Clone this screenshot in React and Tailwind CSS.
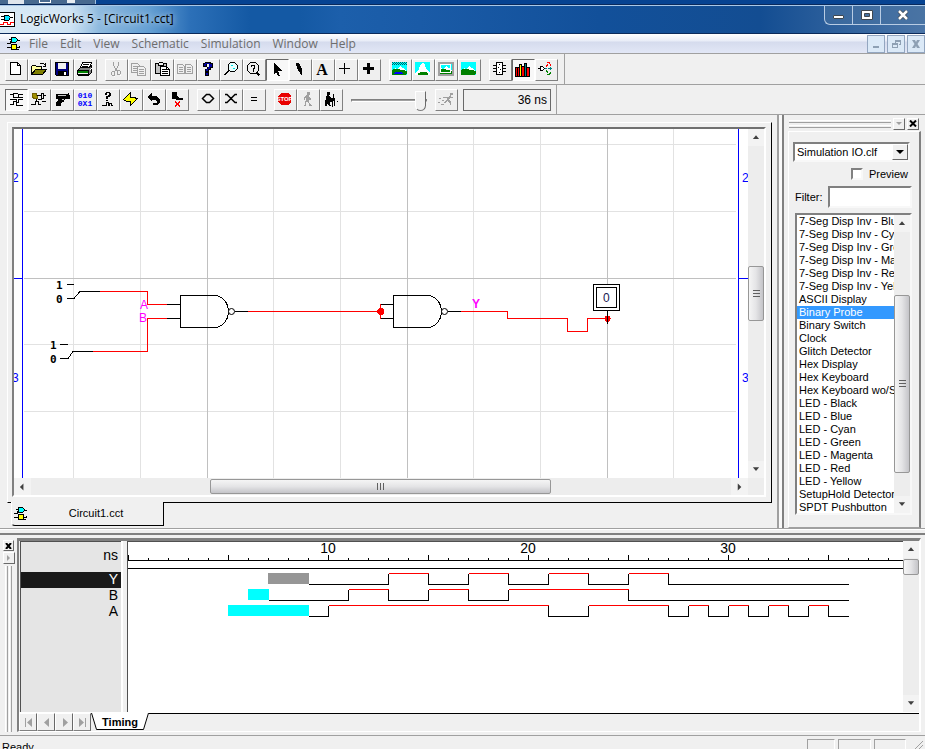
import React from "react";

const INK = "#000";
const DIM = "#a0a0a0";

function Icon({ children, w = 16, h = 16, color = INK }) {
  return (
    <svg width={w} height={h} viewBox={`0 0 ${w} ${h}`} fill="none" stroke={color} shapeRendering="crispEdges" className="shrink-0" aria-hidden="true">
      {children}
    </svg>
  );
}

const GateIcon = () => (
  <Icon w={13} h={14}>
    <path d="M4.5 0.5h4l2 2v1l-2 2h-4z" fill="#00ffff" />
    <path d="M2 2.5h2M11 3.5h2M0 6.5h3v-2h2M0 10.5h4M10 10.5h2v-2M10 12.5h2" />
    <path d="M4.5 7.5h5v5h-5z" fill="#ffff00" />
  </Icon>
);

const NewIcon = () => (
  <Icon><path d="M2.5 0.5h7l3 3v9h-10z" fill="#fff" /><path d="M9.5 0.5v3h3" /></Icon>
);
const OpenIcon = () => (
  <Icon>
    <path d="M0.5 12.5v-8l1-1h3l1 1h5v3" fill="#ffffa0" />
    <path d="M0.5 12.5l4-5h11l-4 5z" fill="#808000" />
    <path d="M8.5 2.5l1-1h3l2 2M14.5 1v3h-3" />
  </Icon>
);
const SaveIcon = () => (
  <Icon>
    <path d="M1.5 0.5h13v13h-12l-1-1z" fill="#000080" />
    <path d="M4 1h8v6h-8z" fill="#f0f0f0" stroke="none" />
    <path d="M4 9h9v4h-9z" fill="#000" stroke="none" />
    <path d="M10 10h2v3h-2z" fill="#fff" stroke="none" />
  </Icon>
);
const PrintIcon = () => (
  <Icon>
    <path d="M5.5 0.5h9l-2 5h-9z" fill="#fff" />
    <path d="M6 2.5h6M5 4.5h6" />
    <path d="M3.5 5.5h9l2-2v7l-3 3h-10l-1-1v-4z" fill="#808080" />
    <path d="M0.5 8.5h11v4h-11z" fill="#f0f0f0" />
    <path d="M1 9h10v2h-10z" fill="#008000" stroke="none" />
    <path d="M12.5 8.5l2-2" stroke="#fff" />
  </Icon>
);
const CutIcon = () => (
  <Icon color={DIM}>
    <path d="M5.5 0v3l1 2 2 3v1M10.5 0v3l-1 2-2 3v1" />
    <path d="M4.5 9.5h2v4h-2l-1-1v-2zM9.5 8.5h2l1 1v2l-1 1h-2z" />
    <path d="M6 14.5h1M12 13.5h1" stroke="#fff" />
  </Icon>
);
const CopyIcon = () => (
  <Icon color={DIM}>
    <path d="M0.5 1.5h6l2 2v7h-8z" />
    <path d="M2 4.5h4M2 6.5h4M2 8.5h4" />
    <path d="M6.5 4.5h6l2 2v7h-8z" fill="#f0f0f0" />
    <path d="M8 7.5h5M8 9.5h5M8 11.5h5" />
  </Icon>
);
const PasteIcon = () => (
  <Icon>
    <path d="M1.5 1.5h11v10h-11z" fill="#c0c0c0" />
    <path d="M4.5 1.5l1-1h3l1 1v2h-5z" fill="#f0f0f0" />
    <path d="M6.5 4.5h6l3 3v6h-9z" fill="#fff" />
    <path d="M8 7.5h4M8 9.5h6M8 11.5h6M12.5 4.5v3h3" />
  </Icon>
);
const DupIcon = () => (
  <Icon color={DIM}>
    <path d="M0.5 2.5h5l2 2v7h-7zM8.5 2.5h5l2 2v7h-7z" />
    <path d="M2 5.5h4M2 7.5h4M2 9.5h4M10 5.5h4M10 7.5h4M10 9.5h4" />
  </Icon>
);
const HelpIcon = () => (
  <Icon color="none">
    <path d="M5 0h6v1h2v5h-2v2h-2v2h-4v-3h2v-2h2v-3h-2v3h-4v-4h2zM5 10h4v4h-4z" fill="#000" />
    <path d="M5 1h5v1h2v3h-2v2h-2v2h-2v-2h2v-2h1v-3h-3v2h-2v-2h1zM6 11h2v2h-2z" fill="#0000a0" />
  </Icon>
);
const ZoomIcon = () => (
  <Icon>
    <path d="M7.5 0.5h4l3 3v3l-3 3h-4l-2-2v-5z" fill="#e8ffff" />
    <path d="M8 3.5h2M10 6.5h2" stroke="#00e0e0" />
    <path d="M5.5 8.5l-5 5M6.5 8.5l-5 5" />
  </Icon>
);
const FindIcon = () => (
  <Icon>
    <path d="M4.5 0.5h5l3 3v5l-3 3h-5l-3-3v-5z" />
    <path d="M10.5 10.5l3 3" strokeWidth="2" />
    <path d="M5.5 4.5v-1h3v3h-1v2M7 9.5h1" />
  </Icon>
);
const ArrowIcon = () => (
  <Icon color="none"><path d="M5 1v11l2-2 2 4h2l-2-5h4z" fill="#000" /></Icon>
);
const PenIcon = () => (
  <Icon color="none"><path d="M4 1h3l3 6v6h-1l-4-7z" fill="#000" /></Icon>
);
const LetterIcon = () => (
  <Icon color="none">
    <text x="7" y="13" textAnchor="middle" fontSize="16" fill="#000" className="font-['Liberation_Serif',serif] font-bold">A</text>
  </Icon>
);
const CrossIcon = () => <Icon><path d="M6.5 1v11M1 6.5h11" /></Icon>;
const PlusIcon = () => <Icon><path d="M7.5 1v11M2 6.5h11" strokeWidth="3" /></Icon>;

function Scene({ kind }) {
  return (
    <Icon color="none">
      <path d="M0 0h15v13h-15z" fill="#00ffff" />
      {kind === "rain" && <path d="M0 0.5h15M1 1.5h14M0 2.5h15" stroke="#006060" strokeDasharray="1 1" />}
      {kind === "peak" ? (
        <path d="M0 13v-2l4-3 1-5 3-3 2 3 1 4 4 4v2z" fill="#fff" />
      ) : (
        <path d="M1 9l2-3 2 1 3-3 3 2 4 4v2h-14z" fill="#fff" />
      )}
      <path d={kind === "peak" ? "M3 11l3-1h4l3 1v2h-10z" : "M0 8l1-1h5l4 1 5 1v3l-2 1h-13z"} fill="#008000" />
      {kind === "rain" && <path d="M3 10h6l2 1-1 1h-8z" fill="#0000ff" />}
      {kind === "frame" && <path d="M0.5 0.5h14v12h-14z" stroke="#a0a0a0" strokeWidth="2" />}
      {kind === "frame" && <path d="M2.5 2.5h10v8h-10z" stroke="#fff" />}
    </Icon>
  );
}

const ChipIcon = () => (
  <Icon>
    <path d="M4.5 0.5h6v12h-6z" fill="#fff" />
    <path d="M1 3.5h3M1 6.5h3M1 9.5h3M11 3.5h3M11 6.5h3M11 9.5h3M7 2.5h1M6 5.5h1M8 7.5h1M7 10.5h1" />
  </Icon>
);
const BooksIcon = () => (
  <Icon>
    <path d="M0.5 5.5h4v9h-4z" fill="#ff0000" />
    <path d="M4.5 2.5h2v12h-2z" fill="#ffff00" />
    <path d="M6.5 4.5h3v10h-3z" fill="#ff0000" />
    <path d="M9.5 1.5h2v13h-2z" fill="#008080" />
    <path d="M11.5 5.5h3v9h-3z" fill="#ff0000" />
    <path d="M2.5 6v8" />
  </Icon>
);
const RouteIcon = () => (
  <Icon>
    <path d="M0 6.5h2M2.5 4.5h2l2 2-2 2h-2z" fill="#fff" />
    <path d="M8 4.5l4-4M9 0.5h3v3" stroke="#ff0000" strokeDasharray="3 1" />
    <path d="M8 8.5l4 4M9 12.5h3v-3" stroke="#008000" strokeDasharray="3 1" />
    <path d="M7 6.5h2M10 6.5h4M12.5 5v3" stroke="#008080" />
  </Icon>
);

const WaveIcon = () => (
  <Icon>
    <path d="M2 2.5h3v3h5v-3h5M2 7.5h6v3h2v-3h5M2 12.5h3v-3h3v4h7" />
    <path d="M5 1.5h5M11 5.5h4" />
  </Icon>
);
const ProbeIcon = () => (
  <Icon>
    <path d="M1 1.5h4l1 2v3h-3l-2-2z" fill="#a09000" stroke="#706000" />
    <path d="M6 3.5h4M10.5 1v5h2v-5zM13 3.5h2" />
    <path d="M0 12.5h4v-3h3v3h3M11 9.5h4M7 7.5h4M5.5 7v2" />
  </Icon>
);
const GunIcon = () => (
  <Icon color="none">
    <path d="M2 2h12v-1h1v2h1v4h-5l-1 3h-2l-1 1v3h-5v-3l2-3-1-2-1 1v-3l-1-1z" fill="#000" />
    <path d="M4 3h8v1h-8zM8 7h2v1h-2z" fill="#c8c8c8" />
  </Icon>
);
const BitsIcon = () => (
  <Icon color="none">
    <g fill="#0000ff" fontSize="8" textAnchor="middle" className="font-['Liberation_Mono',monospace] font-bold">
      <text x="8" y="6">010</text>
      <text x="8" y="14">0X1</text>
    </g>
  </Icon>
);
const QueryIcon = () => (
  <Icon>
    <path d="M5 3v-2h1v-1h4v1h1v3h-1v1h-2v2h-2v-3h2v-1h1v-2h-2v2zM6 8h2v1h-2z" fill="#000" stroke="none" />
    <path d="M2 13.5h4v-3h2v3h1v-2h2v2h2" />
  </Icon>
);
const BoltIcon = () => (
  <Icon><path d="M0.5 7.5l7-7v5h3l4 1-7 7v-4h-4z" fill="#ffff00" /></Icon>
);
const UndoIcon = () => (
  <Icon color="none"><path d="M1 5l5-4v3h4l4 3v3l-3 3h-4v-2h3l1-1v-1l-2-1h-3v2z" fill="#000" /></Icon>
);
const BootIcon = () => (
  <Icon>
    <path d="M3 0h5v4l3 2h3v2h-7l-1-1h-3z" fill="#000" stroke="none" />
    <path d="M6 9.5l5 5M11 9.5l-5 5" stroke="#ff0000" strokeWidth="1.5" />
  </Icon>
);
const DiamondIcon = () => (
  <Icon><path d="M2.5 6.5l4-4h3l4 4-4 4h-3z" strokeWidth="1.5" shapeRendering="auto" /></Icon>
);
const MeetIcon = () => (
  <Icon><path d="M2 2.5h2l4 4-4 4h-2M14 2.5h-2l-4 4 4 4h2" strokeWidth="1.5" shapeRendering="auto" /></Icon>
);
const EqualIcon = () => <Icon><path d="M5 5.5h6M5 8.5h6" /></Icon>;
const StopIcon = () => (
  <Icon color="none">
    <path d="M4 1h7l3 3v6l-3 3h-7l-3-3v-6z" fill="#e80000" />
    <text x="7.5" y="9" fontSize="6" textAnchor="middle" fill="#fff" className="font-['Liberation_Sans',sans-serif] font-bold">STOP</text>
  </Icon>
);
const StepIcon = () => (
  <Icon color="none">
    <path d="M7 0h3v3h-1v2l2 2v1h-2v2l2 3h1v1h-3v-2l-2-3-1 2v3h-2v-1h1v-3l1-2v-2h-1v2h-1v-3l2-2h1z" fill={DIM} />
  </Icon>
);
const WalkIcon = () => (
  <Icon color="none">
    <path d="M4 0h3v3h-1v1l2 2h2v-4h1v4h1v8h-1v-5h-1v6h-1v-5h-2v2l1 2h-2l-1-3-1 3h-2l1-5v-4l1-2zM2 8h1v6h-1zM14 9h1v1h-1z" fill="#000" />
  </Icon>
);
const RunIcon = () => (
  <Icon color="none">
    <path d="M12 1h3v2h-2v2h2v1h-3l-1 2 2 2v3h-1v-2l-3-2-1 2h-2v-1h1l2-3v-1h-2v-1h3l2-2zM5 5h2v1h-2zM1 6h2v1h-2zM4 8h2v1h-2zM0 10h2v1h-2zM3 12h3v1h-3z" fill={DIM} />
  </Icon>
);

function ToolButton({ label, pressed, children }) {
  return (
    <button
      type="button"
      aria-label={label}
      aria-pressed={pressed || undefined}
      className={
        "flex h-[22px] w-[23px] shrink-0 items-start border pt-[2px] pl-[2px] " +
        (pressed
          ? "border-t-[#696969] border-l-[#696969] border-r-white border-b-white bg-[#f8f8f8]"
          : "border-t-white border-l-white border-r-[#808080] border-b-[#808080] bg-[#efefef]")
      }
    >
      {children}
    </button>
  );
}

function Group({ items }) {
  return (
    <div className="flex">
      {items.map(([label, icon, pressed]) => (
        <ToolButton key={label} label={label} pressed={pressed}>{icon}</ToolButton>
      ))}
    </div>
  );
}

const FILE_TOOLS = [["New", <NewIcon />], ["Open", <OpenIcon />], ["Save", <SaveIcon />], ["Print", <PrintIcon />]];
const EDIT_TOOLS = [
  ["Cut", <CutIcon />], ["Copy", <CopyIcon />], ["Paste", <PasteIcon />], ["Duplicate", <DupIcon />],
  ["Help", <HelpIcon />], ["Zoom", <ZoomIcon />], ["Find", <FindIcon />], ["Point", <ArrowIcon />, true],
  ["Zap", <PenIcon />], ["Text", <LetterIcon />], ["Draw signal", <CrossIcon />], ["Draw bus", <PlusIcon />],
];
const VIEW_TOOLS = [
  ["Reduce", <Scene kind="rain" />], ["Enlarge", <Scene kind="peak" />],
  ["Fit window", <Scene kind="frame" />], ["Normal size", <Scene kind="plain" />],
];
const PANEL_TOOLS = [["Device", <ChipIcon />], ["Parts palette", <BooksIcon />, true], ["Hierarchy", <RouteIcon />]];
const SIM_TOOLS = [
  ["Timing window", <WaveIcon />, true], ["Probe", <ProbeIcon />], ["Trigger", <GunIcon />], ["Signal values", <BitsIcon />],
  ["Query", <QueryIcon />], ["Reset", <BoltIcon />], ["Restore", <UndoIcon />], ["Clear", <BootIcon />],
];
const SPREAD_TOOLS = [["Spread", <DiamondIcon />], ["Compress", <MeetIcon />], ["Normal", <EqualIcon />]];
const RUN_TOOLS = [["Stop", <StopIcon />], ["Single step", <StepIcon />], ["Walk", <WalkIcon />]];

function ScrollArrow({ dir, label }) {
  const d = {
    up: "M1 5l3.5-4 3.5 4z",
    down: "M1 1l3.5 4 3.5-4z",
    left: "M5 0v8l-4-4z",
    right: "M2 0v8l4-4z",
  }[dir];
  return (
    <button type="button" aria-label={label} className="flex size-[17px] shrink-0 items-center justify-center self-center bg-[#f3f3f3]">
      <svg width="8" height="8" viewBox="0 0 9 8" fill="#404040" aria-hidden="true"><path d={d} /></svg>
    </button>
  );
}

function VScroll({ before, thumb, after, grip = true }) {
  return (
    <div className="flex w-4 shrink-0 flex-col items-stretch overflow-hidden bg-[#ededed]">
      <ScrollArrow dir="up" label="Scroll up" />
      <div className={before} />
      <div className={"flex shrink-0 flex-col items-center justify-center gap-[2px] rounded-[2px] border border-[#979797] bg-linear-to-r from-[#f5f5f5] via-[#e4e4e6] to-[#c4c4c8] " + thumb}>
        {grip && [0, 1, 2].map((i) => <span key={i} className="h-px w-[7px] bg-[#606060]" />)}
      </div>
      <div className={after} />
      <ScrollArrow dir="down" label="Scroll down" />
    </div>
  );
}

const MENUS = ["File", "Edit", "View", "Schematic", "Simulation", "Window", "Help"];

function TitleBar() {
  return (
    <header>
      <div className="flex h-[5px] items-start border-b border-[#0a2a5c] bg-[#064392]">
        <div className="flex h-1 w-24 justify-around border-r border-[#a0c0e0] bg-[#47698f] pr-3">
          <span className="w-4 bg-[#dfe5ec]" />
          <span className="h-[3px] w-3 border border-t-0 border-white" />
          <span className="h-[3px] w-2 bg-[#e8edf2]" />
        </div>
      </div>
      <div className="flex h-[29px] items-center border-t border-b border-t-[#a9c8e8] border-b-[#0b2a5a] bg-[linear-gradient(90deg,#d9e9f5_0,#cfe4f4_70px,#8db9de_100px,#649fd3_150px,#2c70b8_190px,#1459a4_250px,#1459a4_300px,#1c5fab_340px,#1a5ba7_420px,#12509a_600px,#134d92_760px,#4c76a8_100%)]">
        <svg width="15" height="15" viewBox="0 0 15 15" shapeRendering="crispEdges" fill="none" stroke="#000" className="shrink-0" aria-hidden="true">
          <path d="M0 0.5h14.5v14h-14.5" fill="#fff" />
          <path d="M4.5 3.5h4l2 2-2 3h-4zM1 4.5h3M1 7.5h3M11 5.5h2" fill="#00e0ff" />
          <path d="M0 12.5h3v-2h4v2h3v-2h4" stroke="#ff0000" />
        </svg>
        <h1 className="ml-[5px] flex-1 pb-px font-['Open_Sans',sans-serif] text-[12px] text-black [text-shadow:0_0_6px_#fff]">LogicWorks 5 - [Circuit1.cct]</h1>
        <div className="flex h-[19px] self-start rounded-bl-md border-b border-l border-[#b8cce4] bg-[#47719f]/50">
          <button type="button" aria-label="Minimize" className="flex w-7 items-center justify-center border-r border-[#b8cce4]">
            <span className="mt-1 h-1 w-[11px] rounded-[1px] border border-[#404850] bg-white" />
          </button>
          <button type="button" aria-label="Maximize" className="flex w-7 items-center justify-center border-r border-[#b8cce4]">
            <svg width="12" height="10" viewBox="0 0 12 10" aria-hidden="true"><path d="M0.5 0.5h11v9h-11z" fill="#fff" stroke="#404850" /><path d="M3.5 3.5h5v3h-5z" fill="#47719f" stroke="#404850" /></svg>
          </button>
          <button type="button" aria-label="Close" className="flex w-11 items-center justify-center">
            <svg width="12" height="10" viewBox="0 0 12 10" aria-hidden="true"><path d="M2 1l8 8M10 1l-8 8" stroke="#404850" strokeWidth="4" /><path d="M2 1l8 8M10 1l-8 8" stroke="#fff" strokeWidth="2.5" /></svg>
          </button>
        </div>
      </div>
    </header>
  );
}

const MDI_ICONS = {
  Minimize: "M5 10h6v2h-6z",
  Restore: "M7 4h6v5h-2v-1h1v-2h-4v1h-1zM4 7h6v5h-6zM5 9v2h4v-2z",
  Close: "M4 4h3l1 2 1-2h3l-2.5 4 2.5 4h-3l-1-2-1 2h-3l2.5-4z",
};

function MenuBar() {
  return (
    <nav className="flex h-5 items-center border-b border-[#a0a0a0] bg-[linear-gradient(#fff_0,#e8ecf7_7px,#d5dbed_8px,#e2e7f6_100%)] pl-[7px]">
      <GateIcon />
      <div className="ml-[9px] flex flex-1 gap-3 font-['Open_Sans',sans-serif] text-[12px] text-[#6d6d6d]">
        {MENUS.map((m) => <button key={m} type="button" className="leading-[18px]">{m}</button>)}
      </div>
      <div className="flex gap-[2px]">
        {Object.entries(MDI_ICONS).map(([name, d]) => (
          <button key={name} type="button" aria-label={name + " document"} className="flex size-[18px] items-center justify-center border border-[#93a6c0] bg-[#dbe9f7]">
            <svg width="16" height="16" viewBox="0 0 16 16" fill="#8ea0b4" fillRule="evenodd" className="shrink-0" aria-hidden="true"><path d={d} /></svg>
          </button>
        ))}
      </div>
    </nav>
  );
}

function Toolbars() {
  return (
    <div>
      <div className="flex h-[31px] border-b border-[#a0a0a0]">
        <div className="flex items-start gap-2 border-r border-[#a0a0a0] pt-[5px] pr-[6px] pl-[5px]">
          <Group items={FILE_TOOLS} />
          <Group items={EDIT_TOOLS} />
          <Group items={VIEW_TOOLS} />
          <Group items={PANEL_TOOLS} />
        </div>
      </div>
      <div className="flex h-[30px] border-b border-[#a0a0a0]">
        <div className="flex items-start gap-2 border-r border-[#a0a0a0] pt-1 pr-[5px] pl-[5px]">
          <Group items={SIM_TOOLS} />
          <Group items={SPREAD_TOOLS} />
          <Group items={RUN_TOOLS} />
          <input
            type="range"
            aria-label="Simulation speed"
            defaultValue="100"
            className="h-[22px] w-[76px] appearance-none bg-transparent [&::-webkit-slider-runnable-track]:h-[3px] [&::-webkit-slider-runnable-track]:border [&::-webkit-slider-runnable-track]:border-t-[#808080] [&::-webkit-slider-runnable-track]:border-x-[#808080] [&::-webkit-slider-runnable-track]:border-b-white [&::-webkit-slider-runnable-track]:bg-[#a0a0a0] [&::-webkit-slider-thumb]:-mt-[9px] [&::-webkit-slider-thumb]:h-5 [&::-webkit-slider-thumb]:w-[11px] [&::-webkit-slider-thumb]:appearance-none [&::-webkit-slider-thumb]:rounded-b-md [&::-webkit-slider-thumb]:border [&::-webkit-slider-thumb]:border-t-white [&::-webkit-slider-thumb]:border-l-white [&::-webkit-slider-thumb]:border-r-[#696969] [&::-webkit-slider-thumb]:border-b-[#808080] [&::-webkit-slider-thumb]:bg-[#f0f0f0]"
          />
          <div className="flex gap-[5px]">
            <ToolButton label="Run"><RunIcon /></ToolButton>
            <output className="flex h-[22px] w-[88px] items-center justify-end border border-[#696969] pr-[3px] text-[12px]">36 ns</output>
          </div>
        </div>
      </div>
    </div>
  );
}

const MINOR_X = [59, 126, 259, 326, 459, 526, 659];
const MAJOR_X = [193, 393, 593];
const MINOR_Y = [15, 82, 215, 282];

function Nand({ x, y, flat }) {
  return (
    <g>
      <path d={`M${x + flat} ${y}h-${flat}v32h${flat}c8 0 14 -8 14 -16s-6 -16 -14 -16`} />
      <circle cx={x + flat + 17} cy={y + 16} r="3" fill="#fff" shapeRendering="auto" />
      <path d={`M${x + flat + 20} ${y + 16}h13`} />
    </g>
  );
}

function Schematic() {
  return (
    <div className="relative min-w-0 flex-1 overflow-hidden bg-white">
      <svg className="absolute inset-0 size-full" fill="none" role="img" aria-label="Circuit1 schematic">
        <g shapeRendering="crispEdges">
          {MINOR_X.map((x) => <path key={x} d={`M${x}.5 0v2000`} stroke="#e2e2e2" />)}
          {MINOR_Y.map((y) => <path key={y} d={`M10 ${y}.5h712`} stroke="#e2e2e2" />)}
          {MAJOR_X.map((x) => <path key={x} d={`M${x}.5 0v2000`} stroke="#c0c0c0" />)}
          <path d="M10 149.5h712" stroke="#c0c0c0" />
          <path d="M8.5 0v2000M724.5 0v2000M0 149.5h8M725 149.5h20" stroke="#0000ff" />
          <g stroke="#ff0000">
            <path d="M86 162.5h47.5v13h20M79 222.5h54.5v-33h20" />
            <path d="M233 182.5h133M366.5 175v15" />
            <path d="M446 182.5h47.5v7h60v13h20v-13h20" />
          </g>
          <g stroke="#000">
            <path d="M53 155.5h7M53 169.5h7l6-7h20M46 215.5h8M46 229.5h8l5-7h20" />
            <path d="M153 175.5h13M153 189.5h13M366.5 175.5h13M366.5 189.5h13" />
            <Nand x={166.5} y={166.5} flat={34} />
            <Nand x={379.5} y={166.5} flat={34} />
            <path d="M593.5 181v14" />
            <path d="M579.5 155.5h26v26h-26zM582.5 158.5h20v20h-20z" fill="#fff" />
          </g>
          <path d="M363 181l2-2h3l2 2v3l-2 2h-3l-2-2z" fill="#ff0000" />
          <path d="M590 189.5l2-3h3l2 3-2 3h-3z" fill="#ff0000" />
          <path d="M593.5 187v8" stroke="#000" />
        </g>
        <g className="font-['Liberation_Sans',sans-serif] text-[12px]">
          <g fill="#0000ff">
            <text x="-2" y="53">2</text><text x="-2" y="253">3</text>
            <text x="728" y="53">2</text><text x="728" y="253">3</text>
          </g>
          <g fill="#ff00ff">
            <text x="126" y="180">A</text><text x="125" y="193">B</text>
            <text x="458" y="179" className="font-bold">Y</text>
          </g>
          <g fill="#000" className="font-['DejaVu_Sans_Mono',monospace] text-[11px] font-bold">
            <text x="42" y="160">1</text><text x="42" y="174">0</text>
            <text x="36" y="220">1</text><text x="36" y="234">0</text>
          </g>
          <text x="589" y="173" fill="#202050">0</text>
        </g>
      </svg>
    </div>
  );
}

function CircuitWindow() {
  return (
    <section className="flex min-w-0 flex-1 flex-col pt-[7px] pr-[5px] pl-[7px]">
      <div className="flex min-h-0 flex-1 flex-col border border-t-white border-r-black border-b-black border-l-white p-1 pr-[5px] pb-[5px]">
        <div className="flex min-h-0 flex-1 flex-col border-2 border-t-[#707070] border-r-white border-b-white border-l-[#808080]">
          <div className="flex min-h-0 flex-1">
            <Schematic />
            <VScroll before="grow-[120]" thumb="h-[55px]" after="grow-[141]" />
          </div>
          <div className="flex h-[17px] bg-[#ededed] pr-4">
            <ScrollArrow dir="left" label="Scroll left" />
            <div className="grow-[179]" />
            <div className="my-px flex w-[341px] items-center justify-center gap-[2px] rounded-[2px] border border-[#979797] bg-linear-to-b from-[#f5f5f5] via-[#e4e4e6] to-[#c4c4c8]">
              {[0, 1, 2].map((i) => <span key={i} className="h-[7px] w-px bg-[#606060]" />)}
            </div>
            <div className="grow-[180]" />
            <ScrollArrow dir="right" label="Scroll right" />
          </div>
        </div>
      </div>
      <button type="button" className="relative z-10 -mt-px mb-[2px] ml-1 flex h-6 w-[153px] items-center rounded-bl border-r border-b border-l border-r-black border-b-black border-l-white bg-[#f0f0f0] pl-[2px] text-[11px]">
        <GateIcon />
        <span className="flex-1 pl-[2px] text-center">Circuit1.cct</span>
      </button>
    </section>
  );
}

const PARTS = [
  "7-Seg Disp Inv - Blue", "7-Seg Disp Inv - Cyan", "7-Seg Disp Inv - Green", "7-Seg Disp Inv - Magenta",
  "7-Seg Disp Inv - Red", "7-Seg Disp Inv - Yellow", "ASCII Display", "Binary Probe", "Binary Switch", "Clock",
  "Glitch Detector", "Hex Display", "Hex Keyboard", "Hex Keyboard wo/S", "LED - Black", "LED - Blue", "LED - Cyan",
  "LED - Green", "LED - Magenta", "LED - Red", "LED - Yellow", "SetupHold Detector", "SPDT Pushbutton",
];

const SUNKEN = "border-2 border-t-[#808080] border-l-[#808080] border-r-[#f8f8f8] border-b-[#f8f8f8] bg-white";
const RAISED = "border border-t-white border-l-white border-r-[#696969] border-b-[#696969] bg-[#f0f0f0]";

function PartsPanel() {
  return (
    <aside className="flex w-[141px] shrink-0 flex-col pt-px pr-1 pl-1 text-[11px]">
      <div className="flex h-[15px] items-center gap-[2px] pr-[2px] pl-px">
        <div className="flex flex-1 flex-col gap-[2px]">
          <span className="h-[3px] border-t border-b border-t-white border-b-[#a0a0a0]" />
          <span className="h-[3px] border-t border-b border-t-white border-b-[#a0a0a0]" />
        </div>
        <button type="button" aria-label="Panel menu" className={"flex size-3 items-center justify-center " + RAISED}>
          <svg width="6" height="4" fill="#a0a0a0" aria-hidden="true"><path d="M0 0h6l-3 3z" /></svg>
        </button>
        <button type="button" aria-label="Close panel" className={"flex size-3 items-center justify-center " + RAISED}>
          <svg width="8" height="7" stroke="#000" strokeWidth="2" aria-hidden="true"><path d="M1 0.5l6 6M7 0.5l-6 6" /></svg>
        </button>
      </div>
      <div className="flex min-h-0 flex-1 flex-col border-t border-r-2 border-b border-l border-t-white border-r-[#808080] border-b-[#a0a0a0] border-l-white pt-[10px] pb-3 pl-1">
        <div className={"mr-[9px] flex h-5 shrink-0 " + SUNKEN}>
          <select aria-label="Library" className="min-w-0 flex-1 appearance-none bg-white pl-[2px] text-[11px] leading-4">
            <option>Simulation IO.clf</option>
          </select>
          <span className={"pointer-events-none flex w-4 items-center justify-center " + RAISED}>
            <svg width="8" height="4" fill="#000" aria-hidden="true"><path d="M0 0h8l-4 4z" /></svg>
          </span>
        </div>
        <label className="mt-[5px] mr-[11px] flex h-[14px] items-center justify-end gap-[6px]">
          <input type="checkbox" className={"size-3 appearance-none " + SUNKEN} />
          Preview
        </label>
        <label className="mt-[5px] mr-[7px] flex h-[22px] items-center gap-[5px] pl-[2px]">
          Filter:
          <input type="text" className={"h-[22px] min-w-0 flex-1 px-1 outline-none " + SUNKEN} />
        </label>
        <div className={"mt-[5px] mr-[7px] ml-[2px] flex min-h-0 flex-1 overflow-hidden " + SUNKEN}>
          <ul role="listbox" aria-label="Parts" className="min-w-0 flex-1 overflow-hidden">
            {PARTS.map((p) => (
              <li
                key={p}
                role="option"
                aria-selected={p === "Binary Probe"}
                className={"h-[13px] overflow-hidden pl-[2px] leading-[13px] whitespace-nowrap " + (p === "Binary Probe" ? "bg-[#3399ff] text-white" : "")}
              >
                {p}
              </li>
            ))}
          </ul>
          <VScroll before="grow-[64]" thumb="h-[178px]" after="grow-[24]" />
        </div>
      </div>
    </aside>
  );
}

const SIGNALS = [
  { name: "Y", unknown: [7, 9], fill: "#969696", edges: [9, 13, 15, 17, 19, 21, 23, 25, 27, 36] },
  { name: "B", unknown: [6, 7], fill: "#00ffff", edges: [7, 11, 13, 15, 17, 19, 25, 36] },
  { name: "A", unknown: [5, 9], fill: "#00ffff", edges: [9, 10, 21, 23, 27, 28, 29, 30, 31, 32, 33, 34, 35, 36] },
];
const TICKS = Array.from({ length: 39 }, (_, i) => i);

function Waveforms() {
  return (
    <svg className="absolute inset-0 size-full" fill="none" shapeRendering="crispEdges" role="img" aria-label="Timing diagram">
      <path d="M0 18.5h4000M0 26.5h4000" stroke="#000" />
      {TICKS.map((t) => <path key={t} d={`M${t * 20 + 0.5} 18v${t % 5 ? -2 : -5}`} stroke="#000" />)}
      {[10, 20, 30].map((t) => (
        <text key={t} x={t * 20} y="11" textAnchor="middle" fill="#000" className="text-[14px]">{t}</text>
      ))}
      {SIGNALS.map((s, row) => {
        const hi = 31.5 + row * 16;
        const lo = hi + 11;
        return (
          <g key={s.name}>
            {s.edges.slice(0, -1).map((from, i) => {
              const x = from * 20 + 0.5;
              const to = s.edges[i + 1] * 20 + 0.5;
              return (
                <g key={from}>
                  <path d={`M${x} ${i % 2 ? hi : lo}H${to}`} stroke={i % 2 ? "#ff0000" : "#000"} />
                  {i > 0 && <path d={`M${x} ${hi}V${lo + 0.5}`} stroke="#000" />}
                </g>
              );
            })}
            <rect x={s.unknown[0] * 20} y={hi - 0.5} width={(s.unknown[1] - s.unknown[0]) * 20 + 1} height="11" fill={s.fill} />
          </g>
        );
      })}
    </svg>
  );
}

const NAV = { First: "M3 2h1v9h-1zM10 2v9l-5-4.5z", Previous: "M9 2v9l-5-4.5z", Next: "M5 2v9l5-4.5z", Last: "M3 2v9l5-4.5zM9 2h1v9h-1z" };

function TimingPanel() {
  return (
    <section className="flex h-[200px] shrink-0 pt-[3px] pb-[3px]">
      <div className="flex w-[17px] shrink-0 flex-col items-center gap-px pt-[2px]">
        <button type="button" aria-label="Close timing" className={"flex size-[11px] items-center justify-center " + RAISED}>
          <svg width="7" height="6" stroke="#000" strokeWidth="2" aria-hidden="true"><path d="M1 0l5 6M6 0l-5 6" /></svg>
        </button>
        <button type="button" aria-label="Expand timing" className={"flex size-3 items-center justify-center " + RAISED}>
          <svg width="4" height="6" fill="#a0a0a0" aria-hidden="true"><path d="M0 0v6l3-3z" /></svg>
        </button>
        <div className="mt-px flex flex-1 gap-px">
          <span className="w-[3px] border-r border-l border-r-[#a0a0a0] border-l-white" />
          <span className="w-[3px] border-r border-l border-r-[#a0a0a0] border-l-white" />
        </div>
      </div>
      <div className="mr-1 flex min-w-0 flex-1 flex-col border-t-[3px] border-r-2 border-b border-l-2 border-t-[#808080] border-r-white border-b-white border-l-[#808080]">
        <div className="flex min-h-0 flex-1 border-b border-white">
          <div className="ml-px w-[101px] shrink-0 border-t border-l border-[#505050] bg-[#e5e5e5] text-right text-[14px]">
            <div className="h-[30px] pt-[5px] pr-[3px] leading-4">ns</div>
            {SIGNALS.map((s) => (
              <div key={s.name} className={"h-4 pr-[3px] leading-[14px] " + (s.name === "Y" ? "bg-[#1a1a1a] text-white" : "")}>{s.name}</div>
            ))}
          </div>
          <div className="w-[6px] shrink-0 border-l-2 border-white" />
          <div className="relative min-w-0 flex-1 overflow-hidden border-t border-l border-[#505050] bg-white">
            <Waveforms />
          </div>
          <VScroll before="h-px" thumb="h-4" after="grow" grip={false} />
        </div>
        <div className="flex h-[18px] shrink-0">
          {Object.entries(NAV).map(([name, d]) => (
            <button key={name} type="button" aria-label={name + " tab"} className="flex w-[18px] items-center justify-center border border-t-white border-r-[#696969] border-b-[#808080] border-l-white bg-[#f0f0f0]">
              <svg width="13" height="13" fill="#a0a0a0" className="shrink-0" aria-hidden="true"><path d={d} /></svg>
            </button>
          ))}
          <button type="button" className="relative flex w-[58px] items-start justify-center">
            <svg width="58" height="18" viewBox="0 0 58 18" className="absolute inset-0" aria-hidden="true">
              <path d="M0 0l5 16.5h48l5-16.5z" fill="#fff" />
              <path d="M0.5 0l5 16.5h47l5-16.5" fill="none" stroke="#000" />
            </svg>
            <span className="relative text-[11px] leading-[18px] font-bold">Timing</span>
          </button>
          <div className="flex-1 border-t border-black" />
        </div>
      </div>
    </section>
  );
}

export default function App() {
  return (
    <div className="flex h-screen w-full flex-col overflow-hidden bg-[#f0f0f0] font-['Liberation_Sans',Arial,sans-serif] text-black">
      <TitleBar />
      <MenuBar />
      <Toolbars />
      <main className="flex min-h-0 flex-1 border-b border-[#a0a0a0]">
        <CircuitWindow />
        <div className="w-[7px] shrink-0 border-r-2 border-l-2 border-r-[#808080] border-l-[#a0a0a0] bg-white/60" />
        <PartsPanel />
      </main>
      <div className="h-[6px] shrink-0 border-t border-b-2 border-t-white border-b-[#808080]" />
      <TimingPanel />
      <footer className="flex h-[14px] shrink-0 justify-between overflow-hidden border-t border-[#a0a0a0] text-[11px]">
        <span className="pt-[5px] pl-[2px] leading-[13px]">Ready</span>
        <div className="flex gap-[3px] pt-[3px] pr-[2px]">
          <span className="w-7 border-t border-r border-l border-t-[#a0a0a0] border-r-white border-l-[#a0a0a0]" />
          <span className="w-[33px] border-t border-r border-l border-t-[#a0a0a0] border-r-white border-l-[#a0a0a0]" />
          <span className="w-8 border-t border-r border-l border-t-[#a0a0a0] border-r-white border-l-[#a0a0a0]" />
          <svg width="14" height="10" stroke="#a0a0a0" aria-hidden="true"><path d="M6 10l8-8M10 10l4-4" /></svg>
        </div>
      </footer>
    </div>
  );
}
